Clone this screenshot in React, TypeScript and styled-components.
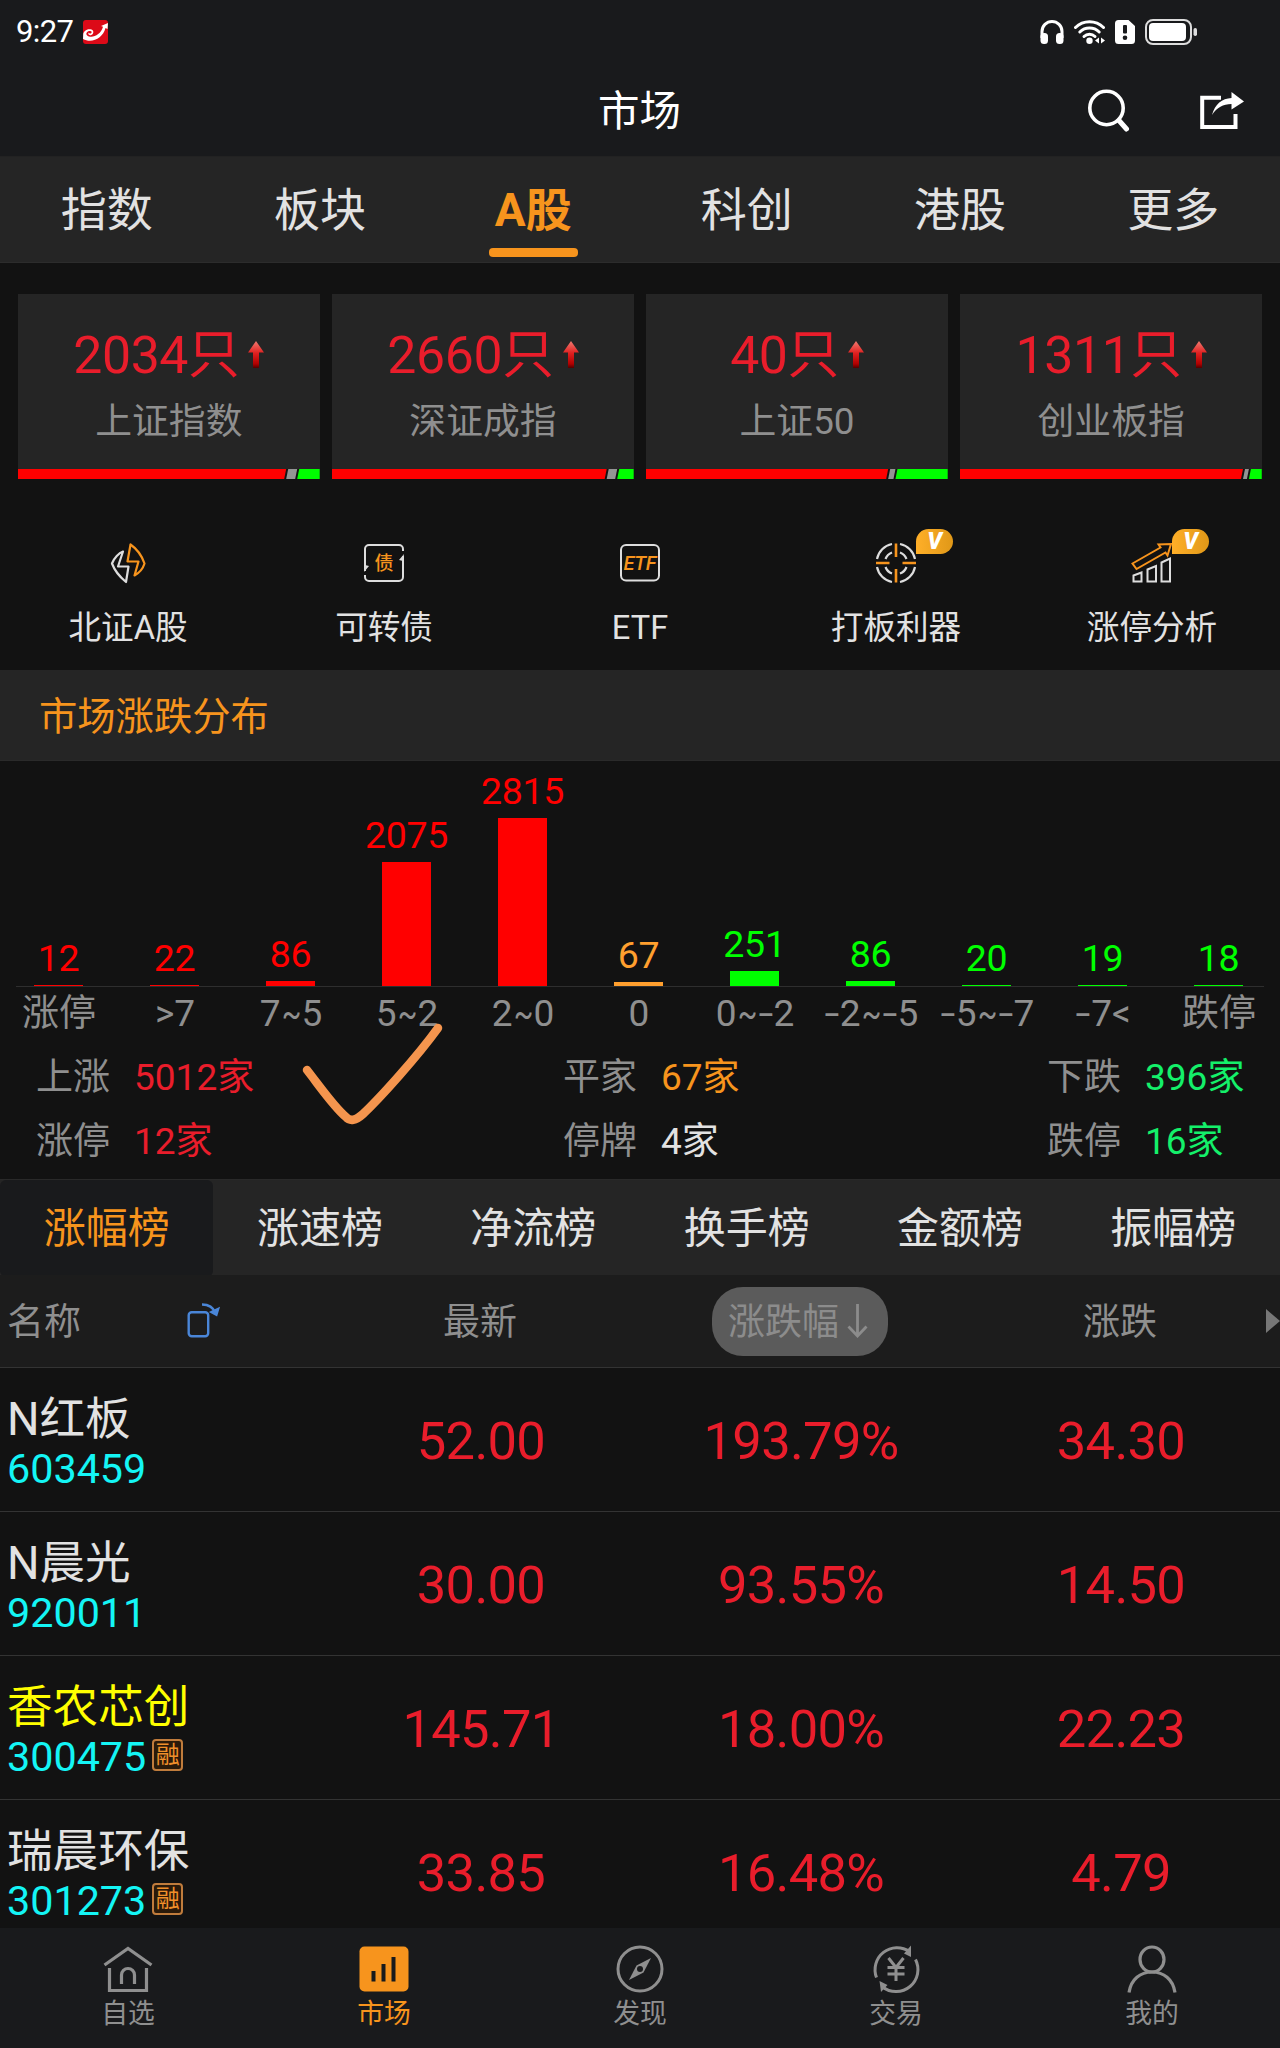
import React from 'react';
import styled, { createGlobalStyle } from 'styled-components';

const c = {
  page: '#121212',
  bar: '#191a1c',
  panel: '#252525',
  head: '#1c1c1c',
  line: '#333333',
  text: '#e2e2e2',
  dim: '#8f8f8f',
  orange: '#f7941d',
  red: '#e91d2b',
  pure: '#ff0000',
  green: '#00ff00',
  mint: '#14f06a',
  cyan: '#14f5f5',
};

const Global = createGlobalStyle`
  * { box-sizing: border-box; }
  body { margin: 0; background: ${c.page}; }
`;

const Screen = styled.div`
  width: 1280px;
  height: 2048px;
  overflow: hidden;
  display: flex;
  flex-direction: column;
  background: ${c.page};
  color: ${c.text};
  font-family: Roboto, 'Noto Sans CJK SC', sans-serif;
  white-space: nowrap;
`;

/* ---------- top ---------- */
const StatusBar = styled.div`
  flex: none;
  height: 65px;
  padding: 0 83px 1px 16px;
  display: flex;
  align-items: center;
  background: ${c.bar};
`;
const Clock = styled.span`
  width: 67px;
  font-size: 31px;
  line-height: 36px;
  letter-spacing: -0.6px;
  font-weight: 400;
  color: #fff;
`;
const StatusIcons = styled.div`
  margin-left: auto;
  display: flex;
  align-items: center;
  gap: 10px;
`;
const Header = styled.header`
  flex: none;
  height: 92px;
  padding: 0 36px 0 35px;
  display: grid;
  grid-template-columns: 1fr auto 1fr;
  align-items: center;
  background: ${c.bar};
  border-bottom: 1px solid #222;
`;
const Title = styled.h1`
  grid-column: 2;
  margin: 3px 0 0;
  font-size: 41.5px;
  line-height: 50px;
  font-weight: 400;
  color: #fff;
`;
const HeaderActions = styled.div`
  justify-self: end;
  display: flex;
  align-items: center;
  gap: 70px;
`;
const Tabs = styled.nav`
  flex: none;
  height: 106px;
  display: grid;
  grid-template-columns: repeat(6, 1fr);
  background: ${c.panel};
  border-bottom: 1px solid #2c2c2c;
`;
const Tab = styled.div<{ $active?: boolean }>`
  display: flex;
  flex-direction: column;
  align-items: center;
  padding-top: 23px;
  gap: 8px;
  font-size: 46px;
  line-height: 60px;
  font-weight: ${(p) => (p.$active ? 700 : 400)};
  color: ${(p) => (p.$active ? c.orange : c.text)};
`;
const TabMark = styled.i`
  width: 89px;
  height: 9px;
  border-radius: 4px;
  background: ${c.orange};
`;

/* ---------- index cards ---------- */
const Cards = styled.section`
  flex: none;
  padding: 31px 18px 0;
  display: grid;
  grid-template-columns: repeat(4, 1fr);
  column-gap: 12.4px;
`;
const Card = styled.div`
  height: 185px;
  display: flex;
  flex-direction: column;
  align-items: center;
  background: ${c.panel};
`;
const CardCount = styled.div`
  margin-top: 32px;
  display: flex;
  align-items: center;
  gap: 9px;
  font-size: 51.8px;
  line-height: 60px;
  letter-spacing: -0.4px;
  color: ${c.red};
`;
const CardName = styled.div`
  margin-top: 13px;
  font-size: 36.8px;
  line-height: 46px;
  color: ${c.dim};
`;
const RatioBar = styled.svg`
  margin-top: auto;
  width: 100%;
  height: 10px;
  display: block;
`;

/* ---------- shortcuts ---------- */
const Shortcuts = styled.section`
  flex: none;
  height: 191px;
  padding-top: 62px;
  display: grid;
  grid-template-columns: repeat(5, 1fr);
`;
const Shortcut = styled.div`
  display: flex;
  flex-direction: column;
  align-items: center;
  gap: 21px;
  font-size: 32.6px;
  line-height: 44px;
  color: ${c.text};
`;
const IconWrap = styled.div`
  position: relative;
  width: 44px;
  height: 44px;
`;
const VipBadge = styled.span`
  position: absolute;
  left: 42px;
  top: -12px;
  width: 37px;
  height: 25px;
  border-radius: 13px 13px 13px 0;
  background: linear-gradient(90deg, #ffaf28, #e09818);
  color: #fff;
  font-size: 23px;
  line-height: 26px;
  font-weight: 900;
  font-style: italic;
  text-align: center;
`;

/* ---------- distribution ---------- */
const SectionTitle = styled.h2`
  flex: none;
  margin: 0;
  height: 91px;
  padding: 1px 39px 0;
  background: ${c.panel};
  border-bottom: 1px solid #2a2a2a;
  color: ${c.orange};
  font-size: 38.3px;
  line-height: 91px;
  font-weight: 400;
`;
const Distribution = styled.section`
  flex: none;
  position: relative;
  height: 418px;
`;
const Plot = styled.div`
  height: 225px;
  padding-right: 3px;
  display: grid;
  grid-template-columns: repeat(11, 116px);
`;
const Column = styled.div<{ $color: string }>`
  display: flex;
  flex-direction: column;
  align-items: center;
  justify-content: flex-end;
  color: ${(p) => p.$color};
  font-size: 37.5px;
  line-height: 44px;
  letter-spacing: -0.3px;
`;
const ColumnValue = styled.span`
  margin-bottom: 5px;
  padding-left: 1px;
`;
const ColumnBar = styled.i`
  width: 49px;
  background: currentColor;
`;
const Axis = styled.div`
  height: 1px;
  margin: 0 16px;
  background: #2e2e2e;
`;
const AxisLabels = styled.div`
  padding: 5px 3px 0 1px;
  display: grid;
  grid-template-columns: repeat(11, 116px);
  justify-items: center;
  font-size: 37px;
  line-height: 44px;
  color: ${c.dim};
`;
const AxisLabel = styled.span`
  display: flex;
`;
const Tilde = styled.span`
  width: 25px;
  margin: 0 -2px;
  text-align: center;
  transform: scaleX(0.78);
`;
const Dash = styled.span`
  width: 16px;
  text-align: center;
  transform: scaleX(1.45);
`;
const Stats = styled.div`
  margin-top: 10px;
  padding-left: 36px;
  display: grid;
  grid-template-columns: 527px 484px auto;
  font-size: 37px;
  line-height: 64px;
`;
const Stat = styled.div<{ $color: string }>`
  display: flex;
  gap: 24px;
  color: ${(p) => p.$color};
`;
const StatName = styled.span`
  color: ${c.dim};
`;
const Doodle = styled.svg`
  position: absolute;
  left: 296px;
  top: 256px;
`;

/* ---------- ranking ---------- */
const RankTabs = styled.nav`
  flex: none;
  height: 96px;
  display: grid;
  grid-template-columns: repeat(6, 1fr);
  background: ${c.panel};
  border-top: 1px solid #292929;
`;
const RankTab = styled.div<{ $active?: boolean }>`
  border-radius: 6px;
  text-align: center;
  font-size: 42px;
  line-height: 97px;
  color: ${(p) => (p.$active ? c.orange : c.text)};
  background: ${(p) => (p.$active ? c.bar : 'transparent')};
`;
const RowGrid = styled.div`
  flex: none;
  display: grid;
  grid-template-columns: repeat(4, 320px);
  align-items: center;
  justify-items: center;
  border-bottom: 1px solid ${c.line};
`;
const TableHead = styled(RowGrid)`
  position: relative;
  height: 93px;
  background: ${c.head};
  color: ${c.dim};
  font-size: 37px;
  line-height: 46px;
`;
const HeadLabel = styled.span`
  padding-top: 3px;
`;
const NameHead = styled.div`
  width: 100%;
  padding-left: 7px;
  display: flex;
  align-items: center;
  gap: 106px;
`;
const SortPill = styled.div`
  height: 69px;
  width: 176px;
  padding-right: 4px;
  border-radius: 31px;
  background: #5b5b5b;
  color: #8c8c8c;
  display: flex;
  align-items: center;
  justify-content: center;
  gap: 8px;
`;
const MoreArrow = styled.i`
  position: absolute;
  right: 0;
  top: 34px;
  border-left: 14px solid #777;
  border-top: 12px solid transparent;
  border-bottom: 12px solid transparent;
`;
const StockRow = styled(RowGrid)`
  height: 144px;
`;
const NameCell = styled.div`
  justify-self: start;
  padding: 5px 0 0 7px;
  display: flex;
  flex-direction: column;
`;
const StockName = styled.span<{ $color?: string }>`
  font-size: 45.6px;
  line-height: 54px;
  color: ${(p) => p.$color || c.text};
`;
const CodeLine = styled.div`
  display: flex;
  align-items: center;
  gap: 6px;
  font-size: 41.3px;
  line-height: 45px;
  color: ${c.cyan};
`;
const MarginTag = styled.span`
  width: 31px;
  height: 32px;
  margin-top: -4px;
  border: 2px solid #c07c3c;
  border-radius: 4px;
  background: #2a1a0a;
  color: #f0902a;
  font-size: 24px;
  line-height: 29px;
  display: flex;
  justify-content: center;
`;
const Quote = styled.span`
  padding: 3px 0 0 2px;
  font-size: 52.5px;
  line-height: 60px;
  letter-spacing: -0.7px;
  color: ${c.red};
`;
const List = styled.div`
  flex: 1;
  min-height: 0;
  overflow: hidden;
`;

/* ---------- bottom ---------- */
const BottomNav = styled.nav`
  flex: none;
  height: 120px;
  padding-top: 16px;
  display: grid;
  grid-template-columns: repeat(5, 1fr);
  background: ${c.bar};
`;
const NavItem = styled.div<{ $active?: boolean }>`
  display: flex;
  flex-direction: column;
  align-items: center;
  gap: 2px;
  font-size: 26.8px;
  line-height: 36px;
  color: ${(p) => (p.$active ? c.orange : c.dim)};
`;

/* ---------- data ---------- */
type CardData = { count: string; name: string; red: number; grey: number };
const cards: CardData[] = [
  { count: '2034只', name: '上证指数', red: 268, grey: 279 },
  { count: '2660只', name: '深证成指', red: 274.5, grey: 285 },
  { count: '40只', name: '上证50', red: 242, grey: 249.3 },
  { count: '1311只', name: '创业板指', red: 282.8, grey: 288.7 },
];

const buckets: [string, number, string][] = [
  ['涨停', 12, c.pure],
  ['>7', 22, c.pure],
  ['7~5', 86, c.pure],
  ['5~2', 2075, c.pure],
  ['2~0', 2815, c.pure],
  ['0', 67, '#ff9f2e'],
  ['0~-2', 251, c.green],
  ['-2~-5', 86, c.green],
  ['-5~-7', 20, c.green],
  ['-7<', 19, c.green],
  ['跌停', 18, c.green],
];
const PEAK = 2815;
const PEAK_HEIGHT = 168;

const stats: [string, string, string][] = [
  ['上涨', '5012家', c.red],
  ['平家', '67家', c.orange],
  ['下跌', '396家', c.mint],
  ['涨停', '12家', c.red],
  ['停牌', '4家', c.text],
  ['跌停', '16家', c.mint],
];

const stocks = [
  { name: 'N红板', code: '603459', last: '52.00', pct: '193.79%', chg: '34.30' },
  { name: 'N晨光', code: '920011', last: '30.00', pct: '93.55%', chg: '14.50' },
  { name: '香农芯创', code: '300475', last: '145.71', pct: '18.00%', chg: '22.23', color: '#ffff00', margin: true },
  { name: '瑞晨环保', code: '301273', last: '33.85', pct: '16.48%', chg: '4.79', margin: true },
];

/* ---------- drawings ---------- */
const AppLogo = () => (
  <svg width="25" height="24" viewBox="0 0 25 24">
    <rect width="25" height="24" rx="3" fill="#dc0a18" />
    <path d="M0 19C9 24 20 18 22.5 8L24.5 9 25 3 18 6 20 6.8C18 14 11 18 6 16.5 2.500 15.500 2.500 12 6 11c2.500-.5 3.500 1 2 2.200-1 .6-2.200.3-2-.6-1.500 1-.5 3 1.800 2.600 3-.6 3.500-4.500.7-5.600C4.500 8.200 0 11 .2 15z" fill="#fff" />
  </svg>
);

const Headphones = () => (
  <svg width="24" height="24" viewBox="0 0 24 24">
    <path d="M2 18V11.500a10 10 0 0 1 20 0V18" fill="none" stroke="#fff" strokeWidth="3" />
    <rect x=".5" y="13" width="7.500" height="11" rx="3.500" fill="#fff" />
    <rect x="16" y="13" width="7.500" height="11" rx="3.500" fill="#fff" />
  </svg>
);

const Wifi = () => (
  <svg width="31" height="24" viewBox="0 0 31 24">
    <g fill="none" stroke="#fff" strokeWidth="3" strokeLinecap="round">
      <path d="M1.500 7.500a20 20 0 0 1 28 0" />
      <path d="M5.800 12a14 14 0 0 1 19.400 0" />
      <path d="M10 16.500a8 8 0 0 1 11 0" />
    </g>
    <circle cx="15.500" cy="20.800" r="3.200" fill="#fff" />
    <path d="M25 17.500v6l-4-3zM27 17.500v6l4-3z" fill="#fff" />
  </svg>
);

const SimAlert = () => (
  <svg width="20" height="24" viewBox="0 0 20 24">
    <path d="M3.500 0H13.500L20 6V20.500A3.500 3.500 0 0 1 16.500 24h-13A3.500 3.500 0 0 1 0 20.500v-17A3.500 3.500 0 0 1 3.500 0z" fill="#fff" />
    <rect x="8" y="5" width="4" height="8.500" rx="1" fill={c.bar} />
    <circle cx="10" cy="17.800" r="2.300" fill={c.bar} />
  </svg>
);

const Battery = () => (
  <svg width="52" height="26" viewBox="0 0 52 26">
    <rect x="1" y="1" width="45" height="24" rx="7" fill="none" stroke="#ddd" strokeWidth="2" />
    <rect x="4" y="4" width="37" height="18" rx="4" fill="#fff" />
    <rect x="48.500" y="9" width="3.500" height="8" rx="1.700" fill="#ddd" />
  </svg>
);

const SearchIcon = () => (
  <svg width="43" height="44" viewBox="0 0 43 44">
    <circle cx="19.500" cy="19" r="16.700" fill="none" stroke="#fff" strokeWidth="3.600" />
    <path d="M32 31.500L39.500 40" stroke="#fff" strokeWidth="5" strokeLinecap="round" />
  </svg>
);

const ShareIcon = () => (
  <svg width="44" height="38" viewBox="0 0 44 38">
    <path d="M21 5.700H2.200V35H35.500V22" fill="none" stroke="#fff" strokeWidth="4" />
    <path d="M12 23C15 12 22 6.500 31.500 6V0L44 9.500 31.500 17.500V12C23 12 17 15.500 12 23z" fill="#fff" />
  </svg>
);

const RiseArrow = () => (
  <svg width="16" height="27" viewBox="0 0 16 27" style={{ marginTop: -4 }}>
    <defs>
      <linearGradient id="rise" x1="0" y1="0" x2="0" y2="1">
        <stop offset="0" stopColor="#f07a70" />
        <stop offset=".45" stopColor="#e02020" />
        <stop offset=".85" stopColor="#b00000" />
        <stop offset="1" stopColor="#500000" />
      </linearGradient>
    </defs>
    <path d="M8 0L16 11.500H11V27H5V11.500H0z" fill="url(#rise)" />
  </svg>
);

const Ratio = ({ red, grey }: { red: number; grey: number }) => (
  <RatioBar viewBox="0 0 301.500 10" preserveAspectRatio="none">
    <rect width="301.500" height="10" fill={c.page} />
    <path d={`M0 0H${red}L${red - 2} 10H0z`} fill={c.pure} />
    <path d={`M${red + 2} 0H${grey}L${grey - 2} 10H${red}z`} fill="#949494" />
    <path d={`M${grey + 2} 0H301.500V10H${grey}z`} fill={c.green} />
  </RatioBar>
);

const BoltIcon = () => (
  <svg width="44" height="44" viewBox="0 0 44 44" fill="none" strokeWidth="2.200" strokeLinejoin="round">
    <path d="M17 10.500C13 12 8 17 6 22.500 8 28 14 36 20 41L22.500 25.500H12L17 10.500z" stroke="#ddd" />
    <path d="M24.500 3.500L21.500 20.500H32.500L28.500 34.500C33 32 37 27.500 38.500 22.500 36 15 31 8 24.500 3.500z" stroke={c.orange} />
  </svg>
);

const BondIcon = () => (
  <svg width="44" height="44" viewBox="0 0 44 44">
    <g fill="none" stroke="#ddd" strokeWidth="2">
      <path d="M41 10V8a4 4 0 0 0-4-4H7a4 4 0 0 0-4 4v22" />
      <path d="M3 34v2a4 4 0 0 0 4 4h30a4 4 0 0 0 4-4V15" />
    </g>
    <path d="M2 31l5-6-4-1zM42 13l-5 6 4 1z" fill="#ddd" />
    <text x="22" y="28.500" textAnchor="middle" fontSize="19" fontWeight="500" fill={c.orange}>债</text>
  </svg>
);

const EtfIcon = () => (
  <svg width="44" height="44" viewBox="0 0 44 44">
    <rect x="3" y="4" width="38" height="35.500" rx="5" fill="none" stroke="#ddd" strokeWidth="2" />
    <text x="22" y="29" textAnchor="middle" fontSize="20" fontStyle="italic" fontWeight="500" textLength="33" fill={c.orange}>ETF</text>
  </svg>
);

const TargetIcon = () => (
  <svg width="44" height="44" viewBox="0 0 44 44" fill="none" strokeWidth="2.200">
    <g stroke="#ddd">
      <path d="M26 3A19 19 0 0 1 41 18M41 26A19 19 0 0 1 26 41M18 41A19 19 0 0 1 3 26M3 18A19 19 0 0 1 18 3" />
      <path d="M26 11.500A11 11 0 0 1 32.500 18M32.500 26A11 11 0 0 1 26 32.500M18 32.500A11 11 0 0 1 11.500 26M11.500 18A11 11 0 0 1 18 11.500" />
    </g>
    <path d="M22 2.500V16M22 28V41.500M2 22H15.500M28.500 22H42" stroke={c.orange} strokeWidth="2.600" />
  </svg>
);

const LimitIcon = () => (
  <svg width="44" height="44" viewBox="0 0 44 44" fill="none" strokeWidth="2">
    <path d="M3.500 34.500L11.500 31.500V40.500H3.500zM17.500 28.500L26 25V40.500H17.500zM31.500 21.500L40 17.500V40.500H31.500z" stroke="#ddd" />
    <path d="M2.500 22.500L30.500 6.500 28.500 3.500 41 3 37.500 14.500 35.500 11.500 6.500 28z" stroke={c.orange} />
  </svg>
);

const RotateIcon = () => (
  <svg width="33" height="36" viewBox="0 0 33 36" fill="none" stroke="#4a86d8" strokeWidth="2.400">
    <rect x="1.700" y="9.200" width="19.500" height="24" rx="3" />
    <path d="M15 1.500C22 1.500 26.500 5 28.500 10" />
    <path d="M31.500 5.500L29.500 12 24 9z" strokeWidth="2" fill="#4a86d8" />
  </svg>
);

const DownArrow = () => (
  <svg width="21" height="34" viewBox="0 0 21 34" fill="none" stroke="#8c8c8c" strokeWidth="2.800">
    <path d="M10.500 0V32M1.500 22.500L10.500 32 19.500 22.500" />
  </svg>
);

const HomeIcon = () => (
  <svg width="52" height="50" viewBox="0 0 52 50" fill="none" stroke={c.dim} strokeWidth="3.200">
    <path d="M2.500 21L26 4.500 49.500 21" />
    <path d="M7.500 24V46.500H44.500V24" />
    <path d="M19.500 40V31a6.500 6.500 0 0 1 13 0V40" />
  </svg>
);

const MarketIcon = () => (
  <svg width="52" height="50" viewBox="0 0 52 50">
    <rect x="1.500" y="2.500" width="49" height="45" rx="5" fill={c.orange} />
    <path d="M15.500 37.500V27M25.500 37.500V20M35.500 37.500V13" stroke={c.bar} strokeWidth="4" />
  </svg>
);

const CompassIcon = () => (
  <svg width="52" height="50" viewBox="0 0 52 50" fill="none" stroke={c.dim} strokeWidth="3">
    <circle cx="26" cy="25" r="22" />
    <path d="M37 14L29.500 28.500 15 36 22.500 21.500z" fill={c.dim} stroke="none" />
    <circle cx="26" cy="25" r="3" fill={c.bar} stroke="none" />
  </svg>
);

const TradeIcon = () => (
  <svg width="52" height="50" viewBox="0 0 52 50" fill="none" stroke={c.dim} strokeWidth="3">
    <path d="M6.500 33.500A22 22 0 0 1 39.500 7.500M45.500 15.500A22 22 0 0 1 12.500 43" />
    <path d="M41 1.500V13L34 9.500zM9.500 37L17.500 41 11 48z" fill={c.dim} stroke="none" />
    <path d="M18.500 14L26 23.500 33.500 14M26 23.500V37M17.500 23.500H34.500M17.500 30H34.500" />
  </svg>
);

const UserIcon = () => (
  <svg width="52" height="50" viewBox="0 0 52 50" fill="none" stroke={c.dim} strokeWidth="3.200">
    <ellipse cx="26" cy="15.500" rx="12" ry="12.500" />
    <path d="M3 48.500C5 35 14.500 28 26 28s21 7 23 20.500" />
  </svg>
);

const formatRange = (label: string) =>
  label.split(/([~-])/).filter(Boolean).map((part, i) => {
    if (part === '~') return <Tilde key={i}>~</Tilde>;
    if (part === '-') return <Dash key={i}>-</Dash>;
    return <span key={i}>{part}</span>;
  });

const shortcuts = [
  { label: '北证A股', icon: <BoltIcon /> },
  { label: '可转债', icon: <BondIcon /> },
  { label: 'ETF', icon: <EtfIcon /> },
  { label: '打板利器', icon: <TargetIcon />, vip: true },
  { label: '涨停分析', icon: <LimitIcon />, vip: true },
];

const navItems = [
  { label: '自选', icon: <HomeIcon /> },
  { label: '市场', icon: <MarketIcon />, active: true },
  { label: '发现', icon: <CompassIcon /> },
  { label: '交易', icon: <TradeIcon /> },
  { label: '我的', icon: <UserIcon /> },
];

export default function App() {
  return (
    <>
      <Global />
      <Screen>
        <StatusBar>
          <Clock>9:27</Clock>
          <AppLogo />
          <StatusIcons>
            <Headphones />
            <Wifi />
            <SimAlert />
            <Battery />
          </StatusIcons>
        </StatusBar>
        <Header>
          <Title>市场</Title>
          <HeaderActions>
            <SearchIcon />
            <ShareIcon />
          </HeaderActions>
        </Header>
        <Tabs>
          {['指数', '板块', 'A股', '科创', '港股', '更多'].map((t) => (
            <Tab key={t} $active={t === 'A股'}>
              {t}
              {t === 'A股' && <TabMark />}
            </Tab>
          ))}
        </Tabs>

        <Cards>
          {cards.map((card) => (
            <Card key={card.name}>
              <CardCount>
                {card.count}
                <RiseArrow />
              </CardCount>
              <CardName>{card.name}</CardName>
              <Ratio red={card.red} grey={card.grey} />
            </Card>
          ))}
        </Cards>

        <Shortcuts>
          {shortcuts.map((s) => (
            <Shortcut key={s.label}>
              <IconWrap>
                {s.icon}
                {s.vip && <VipBadge>V</VipBadge>}
              </IconWrap>
              {s.label}
            </Shortcut>
          ))}
        </Shortcuts>

        <SectionTitle>市场涨跌分布</SectionTitle>
        <Distribution>
          <Plot>
            {buckets.map(([label, value, color]) => (
              <Column key={label} $color={color}>
                <ColumnValue>{value}</ColumnValue>
                <ColumnBar style={{ height: (value / PEAK) * PEAK_HEIGHT }} />
              </Column>
            ))}
          </Plot>
          <Axis />
          <AxisLabels>
            {buckets.map(([label]) => (
              <AxisLabel key={label}>{formatRange(label)}</AxisLabel>
            ))}
          </AxisLabels>
          <Stats>
            {stats.map(([name, value, color]) => (
              <Stat key={name} $color={color}>
                <StatName>{name}</StatName>
                {value}
              </Stat>
            ))}
          </Stats>
          <Doodle width="152" height="112" viewBox="0 0 152 112">
            <path
              d="M11 53C25 71 38 90 50 100Q56 107 67 97C84 81 121 40 142 11"
              fill="none"
              stroke="#f5954e"
              strokeWidth="8.500"
              strokeLinecap="round"
              strokeLinejoin="round"
            />
          </Doodle>
        </Distribution>

        <RankTabs>
          {['涨幅榜', '涨速榜', '净流榜', '换手榜', '金额榜', '振幅榜'].map((t) => (
            <RankTab key={t} $active={t === '涨幅榜'}>
              {t}
            </RankTab>
          ))}
        </RankTabs>
        <TableHead>
          <NameHead>
            <HeadLabel>名称</HeadLabel>
            <RotateIcon />
          </NameHead>
          <HeadLabel>最新</HeadLabel>
          <SortPill>
            <HeadLabel>涨跌幅</HeadLabel>
            <DownArrow />
          </SortPill>
          <HeadLabel>涨跌</HeadLabel>
          <MoreArrow />
        </TableHead>
        <List>
          {stocks.map((s) => (
            <StockRow key={s.code}>
              <NameCell>
                <StockName $color={s.color}>{s.name}</StockName>
                <CodeLine>
                  {s.code}
                  {s.margin && <MarginTag>融</MarginTag>}
                </CodeLine>
              </NameCell>
              <Quote>{s.last}</Quote>
              <Quote>{s.pct}</Quote>
              <Quote>{s.chg}</Quote>
            </StockRow>
          ))}
        </List>

        <BottomNav>
          {navItems.map((n) => (
            <NavItem key={n.label} $active={n.active}>
              {n.icon}
              {n.label}
            </NavItem>
          ))}
        </BottomNav>
      </Screen>
    </>
  );
}
